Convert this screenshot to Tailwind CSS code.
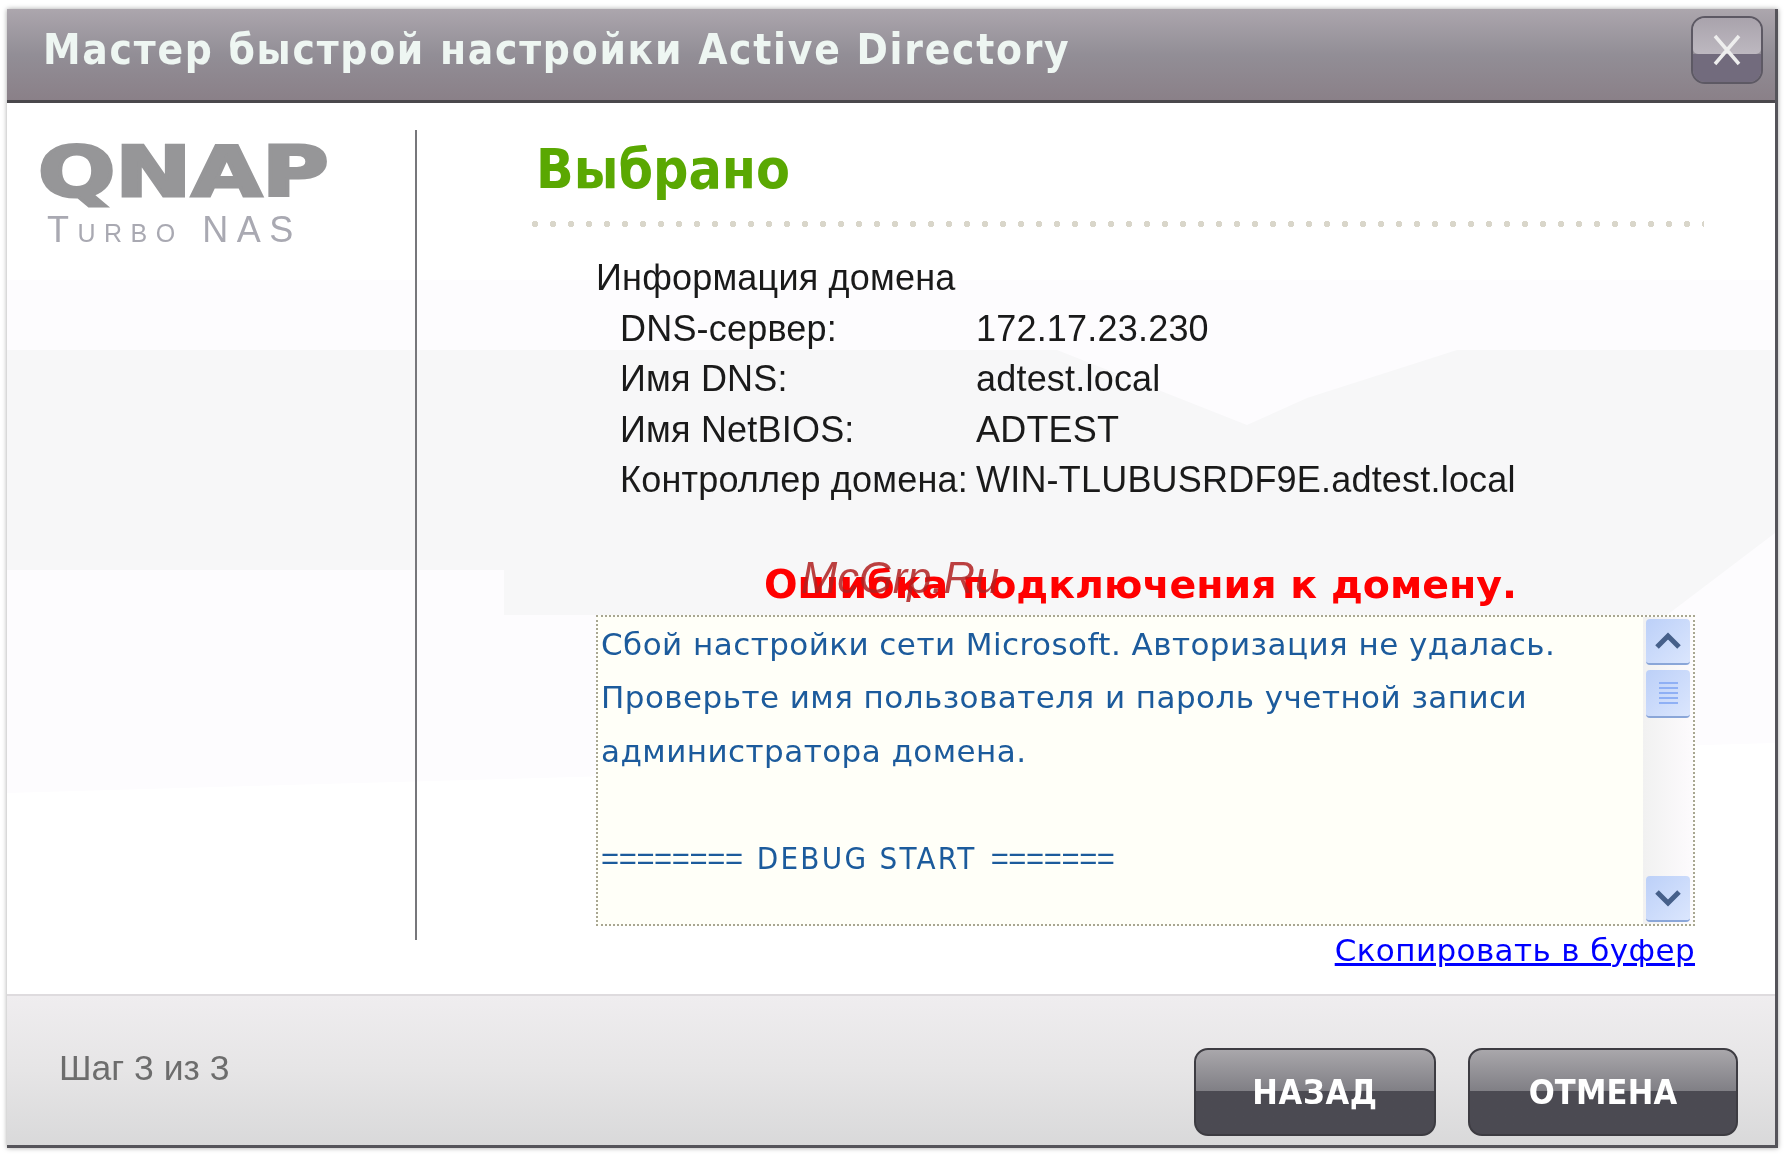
<!DOCTYPE html>
<html lang="ru">
<head>
<meta charset="utf-8">
<title>Active Directory</title>
<script src="https://cdn.jsdelivr.net/npm/@tailwindcss/browser@4"></script>
</head>
<body class="bg-white w-[1786px] h-[1156px] overflow-hidden pt-[9px] pl-[7px]">
  <div class="relative w-[1771px] h-[1139px] flex flex-col bg-white border-r-[3px] border-b-[3px] border-[#55545a] shadow-[0_0_5px_rgba(0,0,0,0.35)] blur-[0.7px]">

    <!-- title bar -->
    <header class="h-[94px] shrink-0 flex items-center justify-between pl-[36px] pr-[12px] bg-gradient-to-b from-[#aca6ad] via-[#928e96] to-[#8a8088] border-b-[3px] border-[#4a484c]">
      <h1 class="mb-[10px] font-['DejaVu_Sans_Condensed'] font-bold text-[42px] tracking-[1.75px] text-[#eef6f2] whitespace-nowrap">Мастер быстрой настройки Active Directory</h1>
      <button class="relative mb-[10px] w-[72px] h-[68px] rounded-[14px] border-2 border-[#5d5964] overflow-hidden flex flex-col">
        <span class="h-[36px] bg-gradient-to-b from-[#a9a3ac] to-[#bdb8c0] rounded-b-[5px]"></span>
        <span class="flex-1 bg-[#726b7d]"></span>
        <svg class="absolute left-[19px] top-[16px]" width="30" height="32" viewBox="0 0 30 32">
          <path d="M3 2 L27 30 M27 2 L3 30" stroke="#eeeeee" stroke-width="3.5" fill="none"/>
        </svg>
      </button>
    </header>

    <!-- body -->
    <main class="relative flex-1 flex bg-white overflow-hidden">
      <!-- faint backdrop -->
      <svg class="absolute left-0 top-0" width="1768" height="892" viewBox="0 0 1768 892">
        <path d="M0 177 H1768 V640 L0 690 Z" fill="#fdfcfe"/>
        <path d="M0 247 H1050 L1240 322 L1300 295 L1450 247 H1768 V430 L1660 512 H497 V467 H0 Z" fill="#f7f7f8"/>
      </svg>

      <!-- left column -->
      <aside class="relative w-[410px] shrink-0 mt-[27px] mb-[54px] border-r-2 border-[#77777b]">
        <div class="pl-[31px] pt-[4px]">
          <div class="font-['DejaVu_Sans'] font-bold text-[70px] leading-[76px] text-[#969698] scale-x-[1.3] origin-left [-webkit-text-stroke:3px_#969698]">QNAP</div>
          <div class="pl-[9px] mt-[1px] font-['Liberation_Sans'] text-[36px] leading-[38px] tracking-[8.5px] text-[#a9a9b2] [font-variant:small-caps] whitespace-nowrap">Turbo NAS</div>
        </div>
      </aside>

      <!-- right column -->
      <section class="relative flex-1 flex flex-col pl-[115px] pr-[80px] pt-[35px]">
        <h2 class="ml-[4px] font-['DejaVu_Sans_Condensed'] font-bold text-[55px] leading-[62px] text-[#5aa802]">Выбрано</h2>
        <div class="mt-[21px] ml-[-6px] mr-[-9px] h-[6px] bg-[radial-gradient(circle,#d9d6ca_3px,transparent_3.5px)] bg-[length:18px_6px]"></div>

        <div class="pl-[64px] mt-[26px] font-['Liberation_Sans'] text-[36px] leading-[50.5px] tracking-[0.2px] text-[#1a1a1a]">
          <p>Информация домена</p>
          <dl class="grid grid-cols-[356px_1fr] pl-[24px]">
            <dt>DNS-сервер:</dt><dd>172.17.23.230</dd>
            <dt>Имя DNS:</dt><dd>adtest.local</dd>
            <dt>Имя NetBIOS:</dt><dd>ADTEST</dd>
            <dt class="whitespace-nowrap">Контроллер домена:</dt><dd class="whitespace-nowrap">WIN-TLUBUSRDF9E.adtest.local</dd>
          </dl>
        </div>

        <p class="mt-[54px] pl-[64px] pr-[10px] text-center font-['DejaVu_Sans'] font-bold text-[39.5px] leading-[48px] text-[#ff0000] whitespace-nowrap">Ошибка подключения к домену.</p>

        <div class="ml-[64px] mt-[7px] h-[311px] flex border-2 border-dotted border-[#a8a692] bg-[#fffff8]">
          <div class="flex-1 pl-[3px] pt-[1px] overflow-hidden font-['DejaVu_Sans'] text-[31px] leading-[53.5px] tracking-[0.45px] text-[#1c5b9c] whitespace-nowrap">
            <p>Сбой настройки сети Microsoft. Авторизация не удалась.</p>
            <p>Проверьте имя пользователя и пароль учетной записи</p>
            <p>администратора домена.</p>
            <p>&nbsp;</p>
            <p class="flex gap-[14px]">
              <span class="font-['Liberation_Sans'] tracking-[-0.4px]">========</span>
              <span class="font-['DejaVu_Sans_Condensed'] tracking-[2.3px]">DEBUG START</span>
              <span class="font-['Liberation_Sans'] tracking-[-0.4px]">=======</span>
            </p>
          </div>
          <div class="w-[50px] shrink-0 flex flex-col justify-between py-[2px] pl-[3px] pr-[3px] bg-gradient-to-r from-[#f1f1f1] to-[#fdfbfd]">
            <div>
              <div class="h-[46px] rounded-[4px] bg-gradient-to-br from-[#bcd0f8] to-[#dbe6fd] border-b-2 border-[#8aa6d8] flex items-center justify-center">
                <svg width="28" height="18" viewBox="0 0 28 18"><path d="M3 15 L14 4 L25 15" stroke="#46608a" stroke-width="5" fill="none"/></svg>
              </div>
              <div class="mt-[5px] h-[48px] rounded-[4px] bg-gradient-to-br from-[#bcd0f8] to-[#dbe6fd] border-b-2 border-[#8aa6d8] flex flex-col items-center justify-center gap-[3px]">
                <span class="w-[19px] h-[2px] bg-[#8fb0f5]"></span>
                <span class="w-[19px] h-[2px] bg-[#8fb0f5]"></span>
                <span class="w-[19px] h-[2px] bg-[#8fb0f5]"></span>
                <span class="w-[19px] h-[2px] bg-[#8fb0f5]"></span>
                <span class="w-[19px] h-[2px] bg-[#8fb0f5]"></span>
              </div>
            </div>
            <div class="h-[46px] rounded-[4px] bg-gradient-to-br from-[#bcd0f8] to-[#dbe6fd] border-b-2 border-[#8aa6d8] flex items-center justify-center">
              <svg width="28" height="18" viewBox="0 0 28 18"><path d="M3 3 L14 14 L25 3" stroke="#46608a" stroke-width="5" fill="none"/></svg>
            </div>
          </div>
        </div>

        <div class="mt-[4px] text-right">
          <a href="#" class="font-['DejaVu_Sans'] text-[31px] leading-[40px] tracking-[0.4px] text-[#0000ff] underline">Скопировать в буфер</a>
        </div>
      </section>
    </main>

    <!-- footer -->
    <footer class="h-[151px] shrink-0 flex items-start justify-between pl-[52px] pr-[37px] border-t-2 border-[#dedbde] bg-gradient-to-b from-[#efedef] via-[#e6e5e6] to-[#d9d9da]">
      <span class="mt-[50px] font-['Liberation_Sans'] text-[35.5px] leading-[44px] text-[#6d6d6d]">Шаг 3 из 3</span>
      <div class="flex gap-[32px] mt-[52px]">
        <button class="relative w-[242px] h-[88px] rounded-[14px] border-2 border-[#3d3c42] overflow-hidden bg-gradient-to-b from-[#a9a7ab] from-0% via-[#807f85] via-[49%] to-[#4b4a52] to-[49%]">
          <span class="font-['DejaVu_Sans_Condensed'] font-bold text-[34px] tracking-[0.7px] text-white">НАЗАД</span>
        </button>
        <button class="relative w-[270px] h-[88px] rounded-[14px] border-2 border-[#3d3c42] overflow-hidden bg-gradient-to-b from-[#a9a7ab] from-0% via-[#807f85] via-[49%] to-[#4b4a52] to-[49%]">
          <span class="font-['DejaVu_Sans_Condensed'] font-bold text-[34px] tracking-[0.2px] text-white">ОТМЕНА</span>
        </button>
      </div>
    </footer>

    <!-- watermark -->
    <span class="absolute left-[794px] top-[547px] font-['Liberation_Sans'] italic text-[43.5px] leading-[44px] text-[#b02020]/85">McGrp.Ru</span>
  </div>
</body>
</html>
